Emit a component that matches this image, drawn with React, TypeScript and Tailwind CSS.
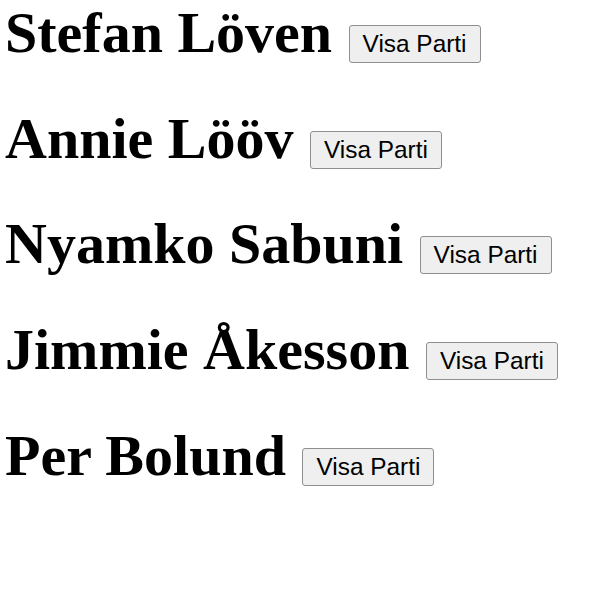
import React from 'react'

const politicians = [
  'Stefan Löven',
  'Annie Lööv',
  'Nyamko Sabuni',
  'Jimmie Åkesson',
  'Per Bolund',
]

const App = () => {
  return (
    <div className="bg-white min-h-[606px] px-[5px] pt-[1px] font-['Liberation_Serif',serif] text-black">
      {politicians.map((name) => (
        <h1 key={name} className="text-[58px] font-bold leading-[64px] mb-[41.7px]">
          {name}{' '}
          <button
            type="button"
            className="ml-[2px] bg-[#efefef] border-[1.5px] border-[#8f8f8f] rounded-[3px] px-[13px] py-[4px] text-[24.4px] leading-[28px] font-normal text-black font-['Liberation_Sans',sans-serif] align-baseline"
          >
            Visa Parti
          </button>
        </h1>
      ))}
    </div>
  )
}

export default App
